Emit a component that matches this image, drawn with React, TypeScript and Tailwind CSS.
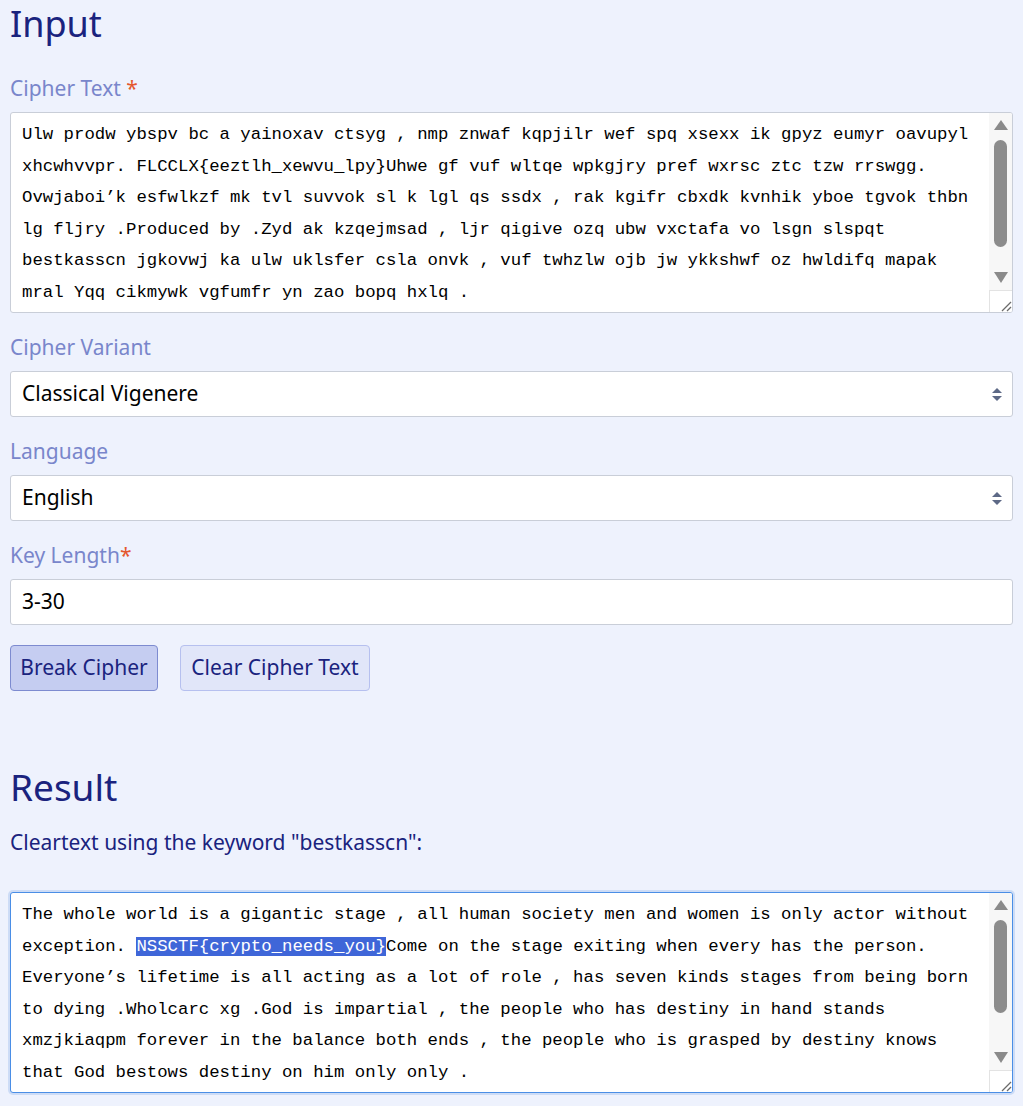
import React from 'react';

const UI_FONT = "font-['Noto_Sans',_'Liberation_Sans',_sans-serif]";
const MONO_FONT = "font-['Liberation_Mono',_'DejaVu_Sans_Mono',_monospace]";

const cipherLines = [
    'Ulw prodw ybspv bc a yainoxav ctsyg , nmp znwaf kqpjilr wef spq xsexx ik gpyz eumyr oavupyl',
    'xhcwhvvpr. FLCCLX{eeztlh_xewvu_lpy}Uhwe gf vuf wltqe wpkgjry pref wxrsc ztc tzw rrswgg.',
    'Ovwjaboi\u2019k esfwlkzf mk tvl suvvok sl k lgl qs ssdx , rak kgifr cbxdk kvnhik yboe tgvok thbn',
    'lg fljry .Produced by .Zyd ak kzqejmsad , ljr qigive ozq ubw vxctafa vo lsgn slspqt',
    'bestkasscn jgkovwj ka ulw uklsfer csla onvk , vuf twhzlw ojb jw ykkshwf oz hwldifq mapak',
    'mral Yqq cikmywk vgfumfr yn zao bopq hxlq .',
    'Ljdl tddl bl ulw qwgfbw nbw ubw iayg .',
];

const Label: React.FC<{ text: string; required?: 'space' | 'tight' }> = ({ text, required }) => (
    <div className="mt-[20px] mb-[10px] h-[28px] text-[21px] leading-[28px] text-[#7986cb]">
        {text}
        {required === 'space' && <span className="text-[#e4572e]"> *</span>}
        {required === 'tight' && <span className="text-[#e4572e]">*</span>}
    </div>
);

const Chevrons = () => (
    <svg width="10" height="13" viewBox="0 0 10 13">
        <polygon points="0,5 5,0 10,5" fill="#5d6986" />
        <polygon points="0,8 10,8 5,13" fill="#5d6986" />
    </svg>
);

const SelectBox: React.FC<{ value: string }> = ({ value }) => (
    <div className="flex h-[46px] items-center justify-between rounded-[3px] border border-[#c9ced8] bg-white pl-[11px] pr-[10px] text-[21px] text-black">
        <span>{value}</span>
        <Chevrons />
    </div>
);

const FakeScrollbar: React.FC<{ thumb: number }> = ({ thumb }) => (
    <div className="flex w-[23px] flex-col items-center bg-[#f7f7f7]">
        <svg className="mt-[7px]" width="14" height="10" viewBox="0 0 14 10">
            <polygon points="0,10 7,0 14,10" fill="#8a8a8a" />
        </svg>
        <div className="mt-[10px] w-[13px] rounded-full bg-[#8c8c8c]" style={{ height: thumb }} />
        <div className="flex-1" />
        <svg width="14" height="11" viewBox="0 0 14 11">
            <polygon points="0,0 14,0 7,11" fill="#8a8a8a" />
        </svg>
        <div className="mt-[7px] flex h-[22px] w-[23px] items-end justify-end border-l border-t border-[#e3e3e3] bg-white">
            <svg width="12" height="12" viewBox="0 0 12 12">
                <line x1="2" y1="11" x2="11" y2="2" stroke="#6b6b6b" strokeWidth="1.3" />
                <line x1="7" y1="11" x2="11" y2="7" stroke="#6b6b6b" strokeWidth="1.3" />
            </svg>
        </div>
    </div>
);

const TextBox: React.FC<{ focused?: boolean; thumb: number; children: React.ReactNode }> = ({ focused, thumb, children }) => (
    <div
        className={
            focused
                ? 'flex h-[201px] overflow-hidden rounded-[3px] border border-[#4a8ee6] bg-white shadow-[0_0_0_2px_#cddcf6]'
                : 'flex h-[201px] overflow-hidden rounded-[3px] border border-[#c9ced8] bg-white'
        }
    >
        <div className={`flex-1 overflow-hidden whitespace-pre pl-[11px] pt-[6px] text-[17.33px] leading-[31.5px] text-black ${MONO_FONT}`}>
            {children}
        </div>
        <FakeScrollbar thumb={thumb} />
    </div>
);

export default function App() {
    return (
        <div className={`h-screen overflow-hidden bg-[#eef2fd] px-[10px] ${UI_FONT}`}>
            <h1 className="mt-[2px] h-[44px] text-[36px] leading-[44px] text-[#1a237e]">Input</h1>

            <div className="mt-[28px] mb-[10px] h-[28px] text-[21px] leading-[28px] text-[#7986cb]">
                Cipher Text<span className="text-[#e4572e]"> *</span>
            </div>
            <TextBox thumb={107}>{cipherLines.join('\n')}</TextBox>

            <Label text="Cipher Variant" />
            <SelectBox value="Classical Vigenere" />

            <Label text="Language" />
            <SelectBox value="English" />

            <Label text="Key Length" required="tight" />
            <div className="flex h-[46px] items-center rounded-[3px] border border-[#c9ced8] bg-white px-[11px] text-[21px] text-black">
                3-30
            </div>

            <div className="mt-[20px] flex gap-[22px]">
                <button className="h-[46px] w-[148px] rounded-[4px] border border-[#7d8bd0] bg-[#c5cdf1] text-[21px] text-[#1a237e]">
                    Break Cipher
                </button>
                <button className="h-[46px] w-[190px] rounded-[4px] border border-[#b6c0ef] bg-[#e1e6f9] text-[21px] text-[#1a237e]">
                    Clear Cipher Text
                </button>
            </div>

            <h2 className="mt-[74px] h-[44px] text-[37px] leading-[44px] text-[#1a237e]">Result</h2>
            <p className="mt-[19px] h-[28px] text-[21px] leading-[28px] text-[#1a237e]">Cleartext using the keyword "bestkasscn":</p>

            <div className="mt-[36px]">
                <TextBox focused thumb={93}>
                    {'The whole world is a gigantic stage , all human society men and women is only actor without\nexception. '}
                    <span className="bg-[#3f66d8] text-white">NSSCTF{'{'}crypto_needs_you{'}'}</span>
                    {'Come on the stage exiting when every has the person.\n' +
                        'Everyone\u2019s lifetime is all acting as a lot of role , has seven kinds stages from being born\n' +
                        'to dying .Wholcarc xg .God is impartial , the people who has destiny in hand stands\n' +
                        'xmzjkiaqpm forever in the balance both ends , the people who is grasped by destiny knows\n' +
                        'that God bestows destiny on him only only .\n' +
                        'Life is all in the hands of its own .'}
                </TextBox>
            </div>
        </div>
    );
}
